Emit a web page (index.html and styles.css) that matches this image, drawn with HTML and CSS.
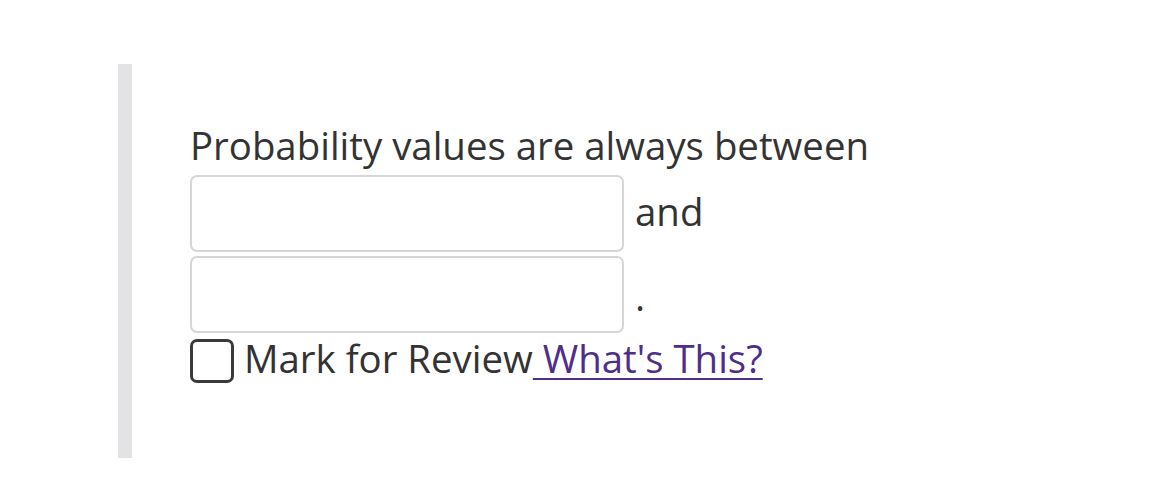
FILE: index.html
```html
<!DOCTYPE html>
<html>
<head>
<meta charset="utf-8">
<link rel="stylesheet" href="styles.css">
</head>
<body>
<div class="page">
  <div class="question">
    <div class="prompt">Probability values are always between</div>
    <div class="blank-row first">
      <input class="blank" type="text">
      <span class="after">and</span>
    </div>
    <div class="blank-row">
      <input class="blank" type="text">
      <span class="after dot">.</span>
    </div>
    <div class="review">
      <span class="box"></span>
      <span class="review-text"><span class="label">Mark for Review</span><a class="help" href="#">&nbsp;What's This?</a></span>
    </div>
  </div>
</div>
</body>
</html>
```

FILE: styles.css
```css
html, body {
  margin: 0;
  padding: 0;
  background: #ffffff;
}
.page {
  padding: 64px 0 0 118px;
}
.question {
  border-left: 14px solid #e3e3e5;
  padding: 60px 0 73px 58px;
  font-family: "Open Sans", "Liberation Sans", sans-serif;
  font-size: 38.4px;
  color: #333333;
  width: 720px;
}
.prompt {
  line-height: 42px;
  padding-bottom: 6px;
}
.blank-row {
  display: flex;
  align-items: center;
  margin-top: 4px;
}
.blank-row.first {
  margin-top: 3px;
}
.blank {
  box-sizing: border-box;
  width: 434px;
  height: 77px;
  border: 2px solid #d6d6d8;
  border-radius: 7px;
  margin: 0;
  padding: 0 12px;
  font: inherit;
  background: #fff;
}
.after {
  margin-left: 11px;
  line-height: 42px;
  padding-bottom: 6px;
}
.after.dot {
  padding: 2px 0 0;
}
.review {
  display: flex;
  align-items: center;
  margin-top: 4px;
  height: 48px;
}
.review-text {
  line-height: 42px;
  padding-bottom: 6px;
}
.box {
  box-sizing: border-box;
  width: 44px;
  height: 44px;
  border: 3px solid #3a3a3a;
  border-radius: 7px;
  margin-right: 10px;
}
.help {
  color: #4f2d8a;
  text-decoration: underline;
  text-decoration-thickness: 2px;
  text-underline-offset: 5px;
}
```
